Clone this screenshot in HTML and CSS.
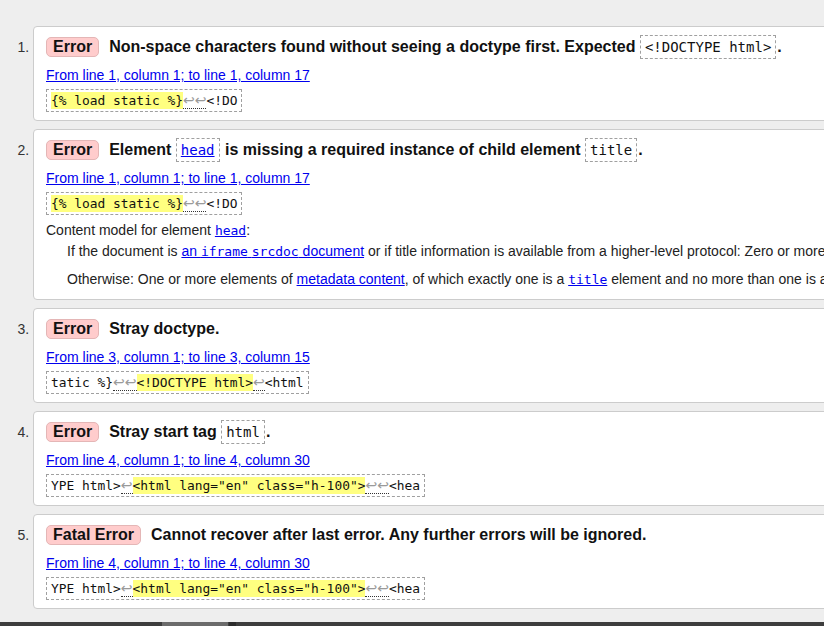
FILE: index.html
```html
<!DOCTYPE html>
<html lang="en">
<head>
<meta charset="utf-8">
<title>Validation results</title>
<link rel="stylesheet" href="styles.css">
</head>
<body>
<ol class="messages">
  <li class="msg">
    <p class="msg-head"><strong class="badge">Error</strong>Non-space characters found without seeing a doctype first. Expected <code class="inline">&lt;!DOCTYPE html&gt;</code>.</p>
    <p class="loc"><a href="#l1">From line 1, column 1; to line 1, column 17</a></p>
    <p class="extract"><code><mark>{% load static %}</mark><span class="lf">↩↩</span>&lt;!DO</code></p>
  </li>
  <li class="msg">
    <p class="msg-head"><strong class="badge">Error</strong>Element <code class="inline"><a href="#head">head</a></code> is missing a required instance of child element <code class="inline">title</code>.</p>
    <p class="loc"><a href="#l1">From line 1, column 1; to line 1, column 17</a></p>
    <p class="extract"><code><mark>{% load static %}</mark><span class="lf">↩↩</span>&lt;!DO</code></p>
    <p class="desc">Content model for element <a href="#head"><code>head</code></a>:</p>
    <dl class="model">
      <dd>If the document is <a href="#srcdoc">an <code>iframe</code> <code>srcdoc</code> document</a> or if title information is available from a higher-level protocol: Zero or more elements of <a href="#meta">metadata content</a>, of which no more than one is a <a href="#title"><code>title</code></a> element and no more than one is a <a href="#base"><code>base</code></a> element.</dd>
      <dd>Otherwise: One or more elements of <a href="#meta">metadata content</a>, of which exactly one is a <a href="#title"><code>title</code></a> element and no more than one is a <a href="#base"><code>base</code></a> element.</dd>
    </dl>
  </li>
  <li class="msg">
    <p class="msg-head"><strong class="badge">Error</strong>Stray doctype.</p>
    <p class="loc"><a href="#l3">From line 3, column 1; to line 3, column 15</a></p>
    <p class="extract"><code>tatic %}<span class="lf">↩↩</span><mark>&lt;!DOCTYPE html&gt;</mark><span class="lf">↩</span>&lt;html</code></p>
  </li>
  <li class="msg">
    <p class="msg-head"><strong class="badge">Error</strong>Stray start tag <code class="inline">html</code>.</p>
    <p class="loc"><a href="#l4">From line 4, column 1; to line 4, column 30</a></p>
    <p class="extract"><code>YPE html&gt;<span class="lf">↩</span><mark>&lt;html lang="en" class="h-100"&gt;</mark><span class="lf">↩↩</span>&lt;hea</code></p>
  </li>
  <li class="msg">
    <p class="msg-head"><strong class="badge">Fatal Error</strong>Cannot recover after last error. Any further errors will be ignored.</p>
    <p class="loc"><a href="#l4">From line 4, column 1; to line 4, column 30</a></p>
    <p class="extract"><code>YPE html&gt;<span class="lf">↩</span><mark>&lt;html lang="en" class="h-100"&gt;</mark><span class="lf">↩↩</span>&lt;hea</code></p>
  </li>
</ol>
<div class="hscroll"><span class="hscroll-pad"></span><span class="hscroll-thumb"></span><span class="hscroll-gap"></span></div>
</body>
</html>
```
FILE: styles.css
```css
html {
  overflow: hidden;
}
body {
  margin: 0;
  background: #eeeeee;
  font-family: "Liberation Sans", Arial, sans-serif;
  font-size: 14px;
  color: #222;
}
a {
  color: #0000ee;
}
.messages {
  margin: 0;
  padding: 26px 0 0 33px;
  width: 1200px;
  list-style: decimal;
}
.msg {
  background: #fff;
  border: 1px solid #cccccc;
  border-radius: 4px;
  padding: 6px 12px 8px;
  margin-bottom: 8px;
}
.msg::marker {
  color: #333;
  font-size: 14px;
}
.msg-head {
  margin: 0;
  font-size: 16px;
  line-height: 28px;
  font-weight: bold;
  color: #111;
  white-space: nowrap;
}
.badge {
  display: inline-block;
  line-height: 18px;
  padding: 0 6px;
  border: 1px solid #e4b6b6;
  border-radius: 5px;
  background: #ffcccc;
  margin-right: 10px;
}
.inline {
  display: inline-block;
  font-family: "DejaVu Sans Mono", "Liberation Mono", monospace;
  font-size: 14px;
  font-weight: normal;
  line-height: 20px;
  padding: 1px 4px;
  border: 1px dashed #a0a0a0;
  margin-right: 1px;
}
.loc {
  margin: 4px 0 0;
  line-height: 20px;
}
.extract {
  margin: 4px 0 0;
  line-height: 19px;
}
.extract code {
  display: inline-block;
  font-family: "DejaVu Sans Mono", "Liberation Mono", monospace;
  font-size: 12.9px;
  line-height: 19px;
  padding: 1px 4px;
  border: 1px dashed #a0a0a0;
  white-space: pre;
  color: #111;
}
mark {
  background: #ffff80;
  color: inherit;
  padding: 1px 0;
}
.lf {
  font-family: "DejaVu Sans", sans-serif;
  font-size: 14px;
  color: #9a9a9a;
  border-bottom: 1px dotted #333;
}
.desc {
  margin: 5px 0 0;
  line-height: 20px;
}
.desc code,
.model code {
  font-family: "DejaVu Sans Mono", "Liberation Mono", monospace;
  font-size: 13px;
}
.model {
  margin: 0 0 1px;
  line-height: 20px;
}
.model dd {
  margin: 0 0 0 21px;
  white-space: nowrap;
}
.model dd + dd {
  margin-top: 7px;
}
.hscroll {
  position: fixed;
  left: 0;
  right: 0;
  bottom: 0;
  height: 4px;
  display: flex;
  background: #3d3d3d;
}
.hscroll-pad {
  width: 162px;
}
.hscroll-thumb {
  width: 66px;
  background: #6b6b6b;
}
.hscroll-gap {
  width: 7px;
  margin-left: 1px;
  background: #2c2c2c;
}
```
